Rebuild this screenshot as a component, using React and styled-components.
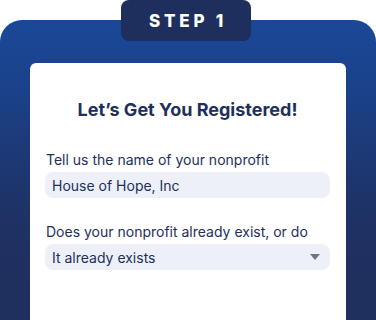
import React from "react";
import styled, { createGlobalStyle } from "styled-components";

const GlobalStyle = createGlobalStyle`
  html, body {
    margin: 0;
    padding: 0;
    background: #fff;
    font-family: Inter, "Noto Sans", sans-serif;
  }
`;

const App = () => {
  return (
    <>
      <GlobalStyle />
      <Screen>
        <Panel>
          <StepTab>STEP 1</StepTab>
          <Card>
            <Title>Let’s Get You Registered!</Title>
            <Field>
              <Label>Tell us the name of your nonprofit</Label>
              <Input>House of Hope, Inc</Input>
            </Field>
            <Field $gap={25}>
              <Label>Does your nonprofit already exist, or do</Label>
              <Select>
                It already exists
                <Caret viewBox="0 0 10 6">
                  <path d="M0 0 H10 L5 6 Z" fill="#6f7480" />
                </Caret>
              </Select>
            </Field>
          </Card>
        </Panel>
      </Screen>
    </>
  );
};

const Screen = styled.div`
  width: 376px;
  height: 320px;
  padding-top: 20px;
  box-sizing: border-box;
  overflow: hidden;
`;

const Panel = styled.div`
  position: relative;
  height: 300px;
  padding: 43px 30px 0;
  box-sizing: border-box;
  border-radius: 22px 22px 0 0;
  background: linear-gradient(180deg, #1a4898 0%, #1b4188 25%, #1e3368 60%, #1f2f5e 85%);
  display: flex;
  flex-direction: column;
`;

const StepTab = styled.div`
  position: absolute;
  top: -20px;
  left: 121px;
  width: 130px;
  height: 41px;
  border-radius: 8px;
  background: #1e2f5e;
  color: #fff;
  font-size: 17px;
  font-weight: 800;
  letter-spacing: 3.8px;
  display: flex;
  align-items: center;
  justify-content: center;
  padding-left: 4px;
  box-sizing: border-box;
`;

const Card = styled.div`
  flex: 1;
  background: #fff;
  border-radius: 6px 6px 0 0;
  padding: 36px 16px 0 15px;
  display: flex;
  flex-direction: column;
`;

const Title = styled.h1`
  margin: 0 0 30px;
  font-size: 18px;
  line-height: 22px;
  font-weight: 700;
  color: #1e2f5c;
  text-align: center;
`;

const Field = styled.div`
  display: flex;
  flex-direction: column;
  gap: 3px;
  margin-top: ${(p) => (p.$gap ? p.$gap : 0)}px;
`;

const Label = styled.div`
  font-size: 14px;
  line-height: 18px;
  color: #1e2f5c;
  padding-left: 1px;
  white-space: nowrap;
`;

const Input = styled.div`
  height: 26px;
  border-radius: 8px;
  background: #edf1f7;
  padding: 0 7px;
  display: flex;
  align-items: center;
  font-size: 14px;
  color: #1e2f5c;
`;

const Select = styled(Input)`
  justify-content: space-between;
  padding-right: 10px;
`;

const Caret = styled.svg`
  width: 10px;
  height: 6px;
`;

export default App;
